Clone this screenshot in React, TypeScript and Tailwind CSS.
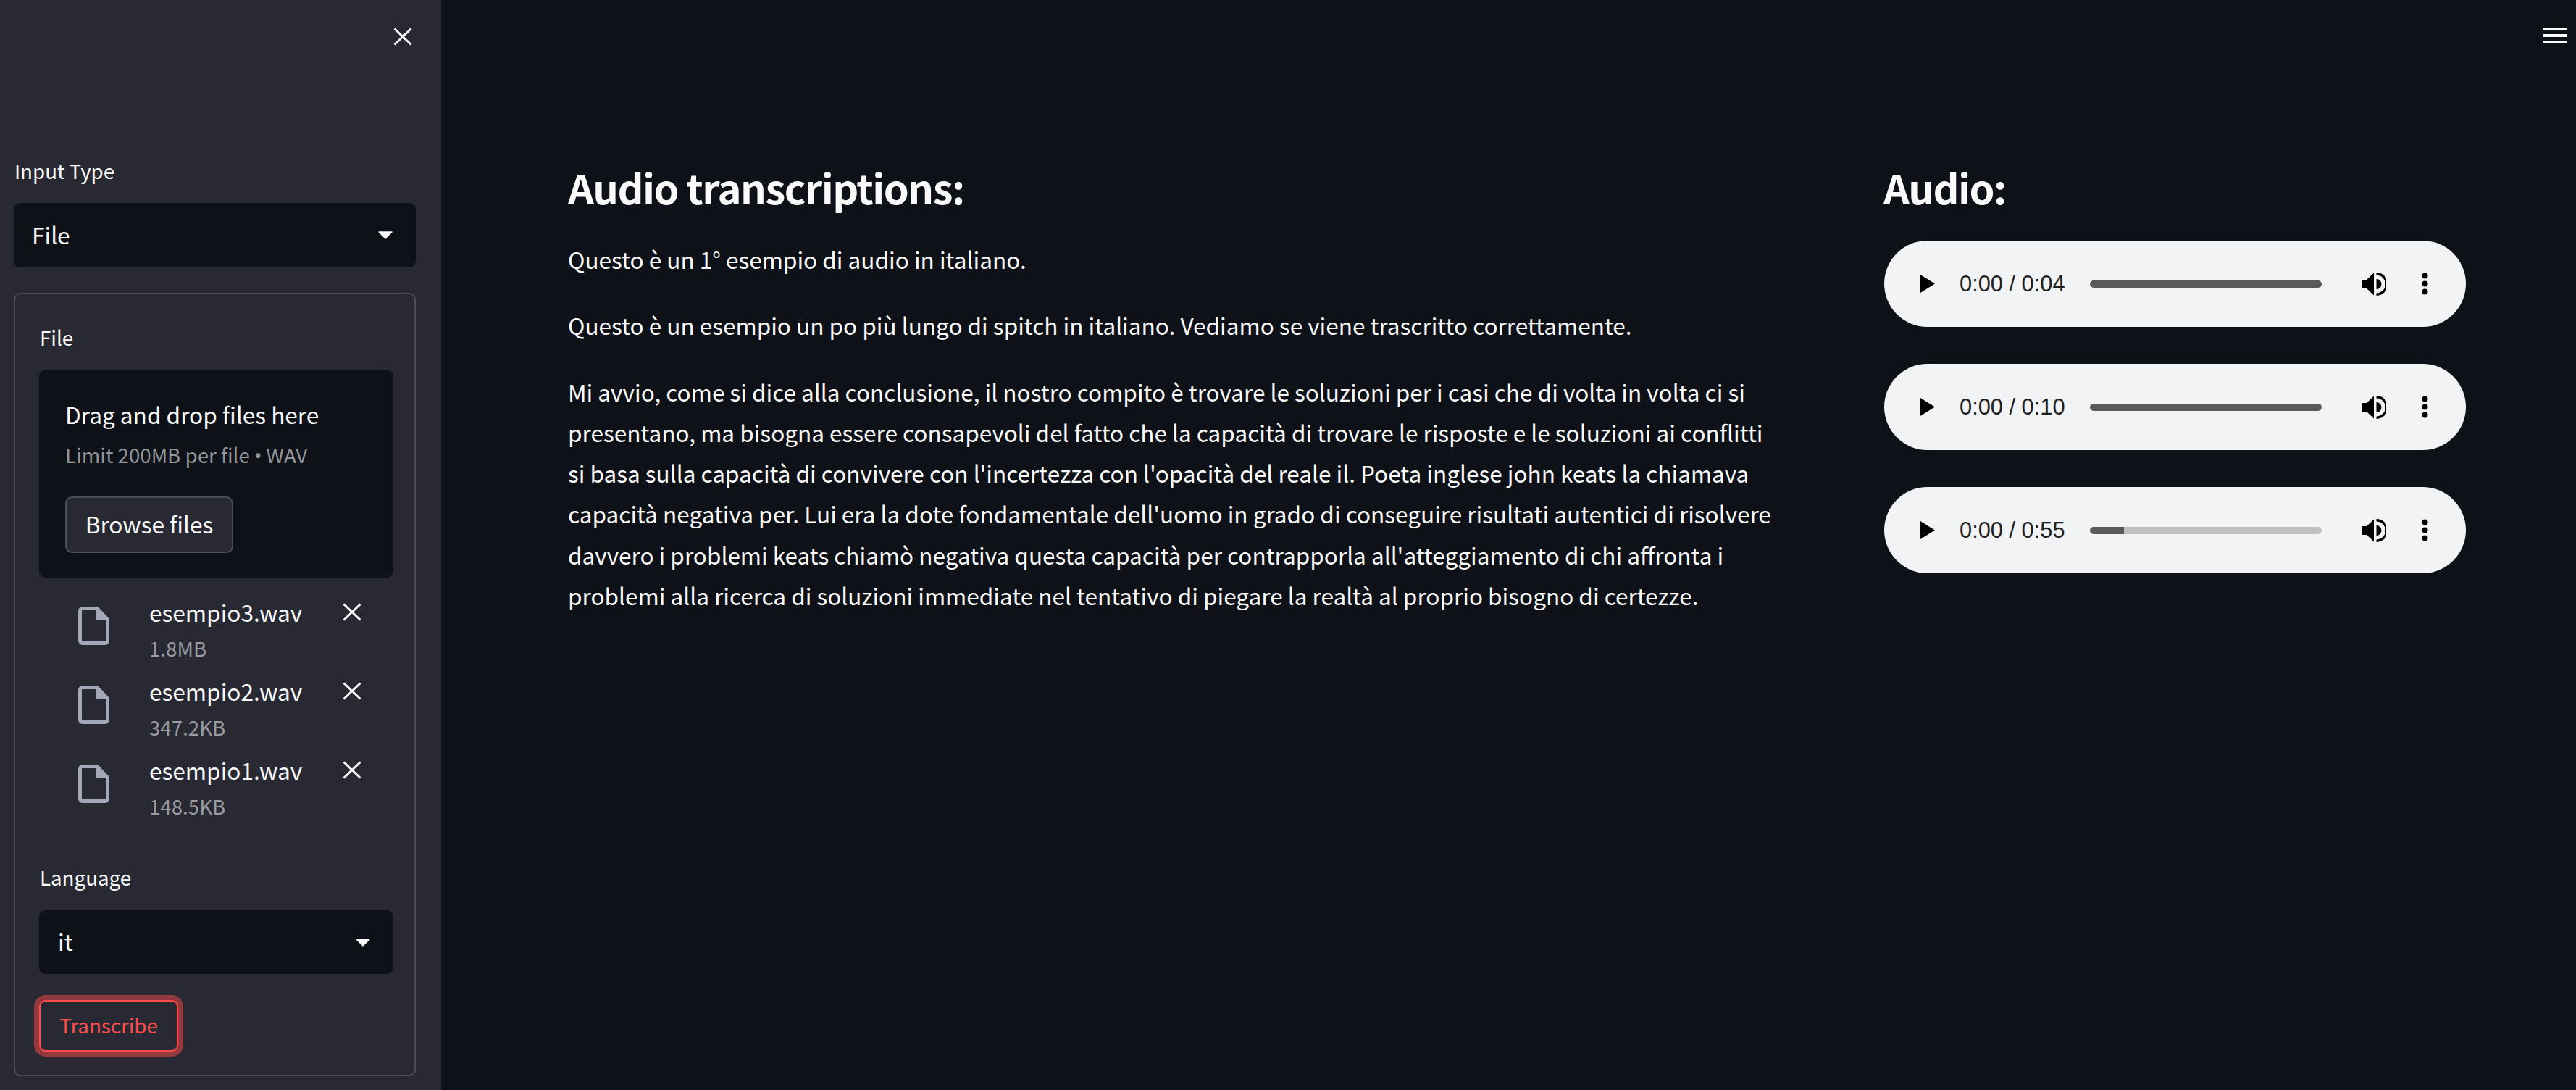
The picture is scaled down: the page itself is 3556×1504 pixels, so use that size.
import React from "react";

const FONT = "font-['Noto_Sans_CJK_SC','Noto_Sans',sans-serif]";

function CloseIcon({ className = "" }: { className?: string }) {
  return (
    <svg viewBox="0 0 26 25" className={`w-[26px] h-[25px] shrink-0 ${className}`} fill="none" stroke="#fafafa" strokeWidth="3">
      <path d="M1.5 1.5 L24.5 23.5 M24.5 1.5 L1.5 23.5" />
    </svg>
  );
}

function Caret() {
  return (
    <svg viewBox="0 0 20 11" className="w-[20px] h-[11px] shrink-0" fill="#fafafa" stroke="#fafafa" strokeWidth="1.4" strokeLinejoin="round">
      <path d="M1 1 H19 L10 10 Z" />
    </svg>
  );
}

function Select({ value, height, textInset, caretRight }: { value: string; height: string; textInset: string; caretRight: string }) {
  return (
    <div className={`flex items-center justify-between rounded-[9px] bg-[#0e1117] ${height} ${textInset} ${caretRight}`}>
      <span className="mb-[4px] text-[31.6px] leading-[56px] text-[#fafafa]">{value}</span>
      <Caret />
    </div>
  );
}

function FileIcon() {
  return (
    <svg viewBox="0 0 43 53" className="w-[43px] h-[53px] shrink-0 mt-[18px]" fill="#a3a8b8">
      <path
        fillRule="evenodd"
        d="M6 0 H27 L43 17 V47 A6 6 0 0 1 37 53 H6 A6 6 0 0 1 0 47 V6 A6 6 0 0 1 6 0 Z M5 5 V48 H38 V19 H25 V5 Z"
      />
    </svg>
  );
}

function FileRow({ name, size }: { name: string; size: string }) {
  return (
    <div className="flex pl-[54px] h-[100px] mb-[9px]">
      <FileIcon />
      <div className="ml-[55px] -mt-[3px] w-[267px] flex flex-col">
        <span className="text-[31.6px] leading-[56px] text-[#fafafa]">{name}</span>
        <span className="text-[27.7px] leading-[44px] text-[#9a9ba0]">{size}</span>
      </div>
      <CloseIcon className="mt-[13px]" />
    </div>
  );
}

function Player({ time, progress }: { time: string; progress?: number }) {
  return (
    <div className="flex items-center h-[119px] w-[803px] rounded-full bg-[#f1f3f4] pl-[50px]">
      <svg viewBox="0 0 20 25" className="w-[20px] h-[25px] shrink-0">
        <path d="M0 0 L20 12.5 L0 25 Z" fill="#000" />
      </svg>
      <span className="ml-[34px] w-[146px] whitespace-nowrap font-['Liberation_Sans',Arial,sans-serif] text-[30.8px] leading-[36px] text-[#1f1f1f]">
        {time}
      </span>
      <div className={`ml-[34px] w-[320px] h-[10px] rounded-[5px] overflow-hidden ${progress ? "bg-[#c0c0c0]" : "bg-[#5a5a5a]"}`}>
        {progress ? <div className="h-full bg-[#5a5a5a]" style={{ width: progress }} /> : null}
      </div>
      <svg viewBox="0 0 34 32" className="ml-[55px] w-[34px] h-[32px] shrink-0">
        <path d="M0 10 H7 L17 0.5 V31.5 L7 22 H0 Z" fill="#000" />
        <path d="M20.5 9 A7 7 0 0 1 20.5 23 Z" fill="#000" />
        <path d="M20.5 1.8 A14.2 14.2 0 0 1 20.5 30.2" fill="none" stroke="#000" strokeWidth="3.4" />
      </svg>
      <svg viewBox="0 0 9 31" className="ml-[49px] w-[9px] h-[31px] shrink-0" fill="#000">
        <circle cx="4.5" cy="4.5" r="4" />
        <circle cx="4.5" cy="15.5" r="4" />
        <circle cx="4.5" cy="26.5" r="4" />
      </svg>
    </div>
  );
}

export default function App() {
  return (
    <div className={`relative flex w-full h-[1504px] overflow-hidden bg-[#0e1117] text-[#fafafa] ${FONT}`}>
      <aside className="w-[609px] shrink-0 h-full bg-[#282933] pl-[19px] pr-[35px] pt-[38px] flex flex-col">
        <div className="flex justify-end pr-[5px]">
          <CloseIcon />
        </div>
        <label className="mt-[150px] mb-[23px] text-[27.7px] leading-[44px] pl-[1px]">Input Type</label>
        <Select value="File" height="h-[89px]" textInset="pl-[25px]" caretRight="pr-[32px]" />

        <section className="mt-[35px] h-[1081px] rounded-[9px] border-2 border-[#4b4c55] pl-[33px] pr-[29px] pt-[37px]">
          <div className="text-[27.7px] leading-[44px] pl-[1px]">File</div>

          <div className="mt-[23px] h-[287px] rounded-[9px] bg-[#0e1117] pl-[36px] pt-[33px]">
            <div className="text-[31.6px] leading-[56px]">Drag and drop files here</div>
            <div className="mt-[6px] text-[27.7px] leading-[44px] text-[#93949a] whitespace-nowrap">
              Limit 200MB per file <span className="font-['Noto_Sans',sans-serif]">•</span> WAV
            </div>
            <button className="mt-[35px] flex items-center justify-center w-[232px] h-[78px] pb-[4px] rounded-[9px] border-2 border-[#4b4c55] bg-[#282933] text-[31.6px] leading-[56px] text-[#fafafa]">
              Browse files
            </button>
          </div>

          <div className="mt-[22px]">
            <FileRow name="esempio3.wav" size="1.8MB" />
            <FileRow name="esempio2.wav" size="347.2KB" />
            <FileRow name="esempio1.wav" size="148.5KB" />
          </div>

          <div className="mt-[51px] mb-[24px] text-[27.7px] leading-[44px] pl-[1px]">Language</div>
          <Select value="it" height="h-[88px]" textInset="pl-[26px]" caretRight="pr-[32px]" />

          <button className="mt-[36px] flex items-center justify-center w-[192px] h-[71px] pb-[4px] rounded-[9px] border-2 border-[#ff4b4b] bg-[#282933] text-[27.7px] leading-[44px] text-[#ff4b4b] shadow-[0_0_0_7px_rgba(255,75,75,0.5)]">
            Transcribe
          </button>
        </section>
      </aside>

      <main className="flex-1 flex pl-[175px] pt-[219px]">
        <div className="w-[1816px] shrink-0">
          <h1 className="text-[56px] leading-[78px] tracking-[-1.5px] font-semibold">Audio transcriptions:</h1>
          <p className="mt-[32px] text-[31.55px] leading-[56.3px]">Questo è un 1° esempio di audio in italiano.</p>
          <p className="mt-[35px] text-[31.55px] leading-[56.3px]">
            Questo è un esempio un po più lungo di spitch in italiano. Vediamo se viene trascritto correttamente.
          </p>
          <p className="mt-[35px] text-[31.55px] leading-[56.3px] whitespace-nowrap">
            Mi avvio, come si dice alla conclusione, il nostro compito è trovare le soluzioni per i casi che di volta in volta ci si
            <br />
            presentano, ma bisogna essere consapevoli del fatto che la capacità di trovare le risposte e le soluzioni ai conflitti
            <br />
            si basa sulla capacità di convivere con l'incertezza con l'opacità del reale il. Poeta inglese john keats la chiamava
            <br />
            capacità negativa per. Lui era la dote fondamentale dell'uomo in grado di conseguire risultati autentici di risolvere
            <br />
            davvero i problemi keats chiamò negativa questa capacità per contrapporla all'atteggiamento di chi affronta i
            <br />
            problemi alla ricerca di soluzioni immediate nel tentativo di piegare la realtà al proprio bisogno di certezze.
          </p>
        </div>
        <div className="w-[804px] shrink-0">
          <h1 className="text-[56px] leading-[78px] tracking-[-1.5px] font-semibold">Audio:</h1>
          <div className="mt-[35px] ml-[1px] flex flex-col gap-[51px]">
            <Player time="0:00 / 0:04" />
            <Player time="0:00 / 0:10" />
            <Player time="0:00 / 0:55" progress={47} />
          </div>
        </div>
      </main>

      <div className="absolute right-[12px] top-[38px] flex flex-col gap-[5px]">
        <div className="w-[34px] h-[4px] bg-[#fafafa]" />
        <div className="w-[34px] h-[4px] bg-[#fafafa]" />
        <div className="w-[34px] h-[4px] bg-[#fafafa]" />
      </div>
    </div>
  );
}
